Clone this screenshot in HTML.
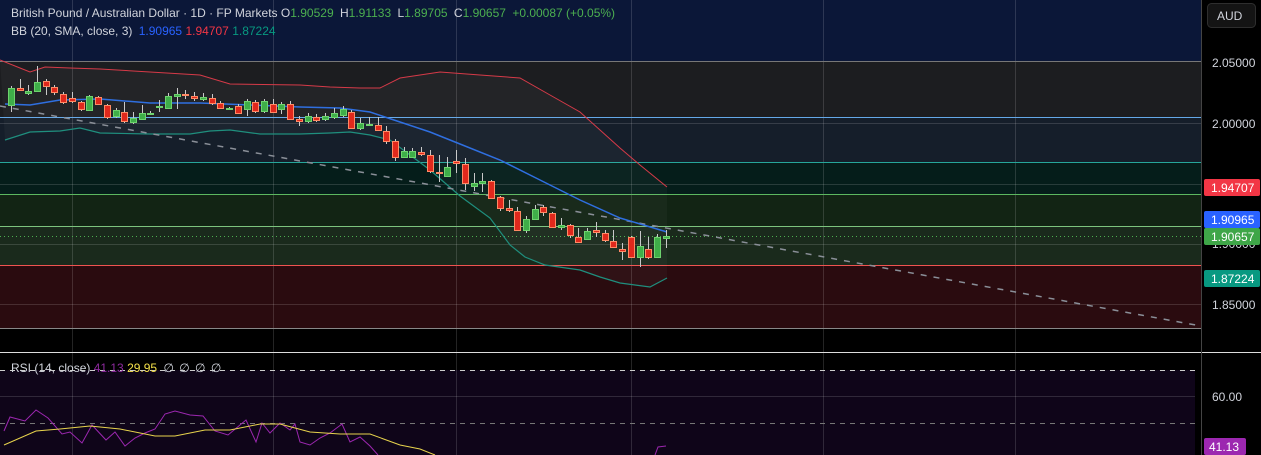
<!DOCTYPE html>
<html><head><meta charset="utf-8"><style>
html,body{margin:0;padding:0;background:#000;width:1261px;height:455px;overflow:hidden;font-family:"Liberation Sans",sans-serif}
svg{position:absolute;left:0;top:0}
.t{font-family:"Liberation Sans",sans-serif;font-size:12px}
</style></head><body>
<svg id="s" width="1261" height="455" xmlns="http://www.w3.org/2000/svg">
<!-- zones -->
<rect x="0" y="0" width="1201" height="61" fill="#0b1738"/>
<rect x="0" y="61" width="1201" height="56" fill="#1c1d20"/>
<rect x="0" y="117" width="1201" height="45" fill="#151e2a"/>
<rect x="0" y="162" width="1201" height="32" fill="#051d1a"/>
<rect x="0" y="194" width="1201" height="32" fill="#122414"/>
<rect x="0" y="226" width="1201" height="39" fill="#1a2a1c"/>
<rect x="0" y="265" width="1201" height="63" fill="#2a0b0f"/>
<rect x="0" y="328" width="1201" height="24" fill="#000"/>
<rect x="0" y="370" width="1195" height="85" fill="#0f0519"/>
<!-- grid -->
<g stroke="#ffffff" stroke-opacity="0.14" stroke-width="1">
<line x1="72.5" y1="0" x2="72.5" y2="455"/><line x1="273.5" y1="0" x2="273.5" y2="455"/>
<line x1="456.5" y1="0" x2="456.5" y2="455"/><line x1="631.5" y1="0" x2="631.5" y2="455"/>
<line x1="823.5" y1="0" x2="823.5" y2="455"/><line x1="1015.5" y1="0" x2="1015.5" y2="455"/>
<line x1="0" y1="123.5" x2="1201" y2="123.5"/><line x1="0" y1="184.5" x2="1201" y2="184.5"/>
<line x1="0" y1="244.5" x2="1201" y2="244.5"/><line x1="0" y1="304.5" x2="1201" y2="304.5"/>
<line x1="0" y1="396.5" x2="1195" y2="396.5"/>
</g>
<line x1="0" y1="61.5" x2="1201" y2="61.5" stroke="#777" />
<line x1="0" y1="117.5" x2="1201" y2="117.5" stroke="#64a8e8"/>
<line x1="0" y1="162.5" x2="1201" y2="162.5" stroke="#26a69a"/>
<line x1="0" y1="194.5" x2="1201" y2="194.5" stroke="#5cb860"/>
<line x1="0" y1="226.5" x2="1201" y2="226.5" stroke="#7cc47e"/>
<line x1="0" y1="236.5" x2="1201" y2="236.5" stroke="#4caf50" stroke-dasharray="1 3"/>
<line x1="0" y1="265.5" x2="1201" y2="265.5" stroke="#ef5350"/>
<line x1="0" y1="328.5" x2="1201" y2="328.5" stroke="#888"/>
<line x1="0" y1="352.5" x2="1261" y2="352.5" stroke="#ddd"/>
<line x1="0" y1="370.5" x2="1195" y2="370.5" stroke="#ccc" stroke-dasharray="5 5"/>
<line x1="0" y1="423.5" x2="1195" y2="423.5" stroke="#777" stroke-dasharray="5 5"/>
<line x1="1201.5" y1="0" x2="1201.5" y2="455" stroke="#444"/>
<!-- band fill -->
<path id="bf" fill="#ffffff" fill-opacity="0.03"/>
<path id="up" fill="none" stroke="#d63a48" stroke-width="1"/>
<path id="lo" fill="none" stroke="#1f8f7e" stroke-width="1.2"/>
<line x1="0" y1="106" x2="1201" y2="326" stroke="#8a8f98" stroke-width="1.5" stroke-dasharray="6 7"/>
<path id="mid" fill="none" stroke="#2f6fe0" stroke-width="1.5"/>
<g id="cd"></g>
<polyline fill="none" stroke="#9c27b0" stroke-width="1" points="4,431 10,417 25,421 36,410 48,418 62,434 70,432 82,443 92,425 106,440 115,432 125,446 135,438 145,433 155,429 165,414 175,411 190,415 203,416 215,431 228,435 240,425 246,420 256,442 262,423 270,433 280,423 290,430 295,424 300,442 310,445 320,438 330,433 342,424 350,442 360,437 370,446 378,455"/>
<polyline fill="none" stroke="#9c27b0" stroke-width="1" points="655,455 658,447 666,446"/>
<polyline fill="none" stroke="#e8d44d" stroke-width="1" points="4,445 36,431 60,429 90,426 120,429 155,436 175,436 205,430 230,430 260,424 280,424 310,432 340,434 370,434 400,445 420,449 435,455"/>
<!-- header -->
<text class="t" x="11" y="17" fill="#d1d4dc">British Pound / Australian Dollar · 1D · FP Markets <tspan>O</tspan><tspan fill="#4caf50">1.90529</tspan> <tspan dx="3">H</tspan><tspan fill="#4caf50">1.91133</tspan> <tspan dx="3">L</tspan><tspan fill="#4caf50">1.89705</tspan> <tspan dx="3">C</tspan><tspan fill="#4caf50">1.90657</tspan> <tspan dx="3" fill="#4caf50">+0.00087 (+0.05%)</tspan></text>
<text class="t" x="11" y="35" fill="#d1d4dc">BB (20, SMA, close, 3) <tspan dx="3" fill="#2962ff">1.90965</tspan> <tspan fill="#f23645">1.94707</tspan> <tspan fill="#089981">1.87224</tspan></text>
<rect x="9" y="362" width="240" height="13" fill="#000" opacity="0"/>
<text class="t" x="11" y="372" fill="#d1d4dc" font-size="11">RSI (14, close) <tspan fill="#8e2a9e">41.13</tspan> <tspan fill="#f5e14a">29.95</tspan> <tspan dx="3">∅</tspan> <tspan dx="2">∅</tspan> <tspan dx="2">∅</tspan> <tspan dx="2">∅</tspan></text>
<!-- axis -->
<rect x="1207.5" y="3.5" width="48" height="24" rx="4" fill="#141414" stroke="#2e2e2e"/>
<text class="t" x="1217" y="20" fill="#d1d4dc">AUD</text>
<g class="t" fill="#d1d4dc">
<text x="1212" y="67">2.05000</text>
<text x="1212" y="128">2.00000</text>
<text x="1212" y="248">1.90000</text>
<text x="1212" y="309">1.85000</text>
<text x="1212" y="401">60.00</text>
</g>
<rect x="1204" y="179" width="56" height="17" rx="2" fill="#f23645"/><text class="t" x="1211" y="192" fill="#fff">1.94707</text>
<rect x="1204" y="211" width="56" height="17" rx="2" fill="#2962ff"/><text class="t" x="1211" y="224" fill="#fff">1.90965</text>
<rect x="1204" y="228" width="56" height="17" rx="2" fill="#3fa648"/><text class="t" x="1211" y="241" fill="#fff">1.90657</text>
<rect x="1204" y="270" width="56" height="17" rx="2" fill="#089981"/><text class="t" x="1211" y="283" fill="#fff">1.87224</text>
<rect x="1204" y="438" width="42" height="17" rx="2" fill="#9c27b0"/><text class="t" x="1209" y="451" fill="#fff">41.13</text>
</svg>
<script>
var up=[[0,60],[20,68],[30,72],[45,67],[70,68],[100,69],[150,72],[200,75],[230,84],[300,85],[330,87],[360,88],[380,88],[400,78],[440,72],[480,75],[520,78],[550,95],[580,112],[600,130],[620,148],[640,165],[667,187]];
var mid=[[5,104],[30,105],[60,100],[100,99],[150,103],[200,103],[250,105],[300,107],[340,108],[370,112],[400,122],[430,132],[460,144],[500,160],[540,180],[580,200],[620,218],[667,232]];
var lo=[[5,140],[30,132],[60,131],[80,128],[100,133],[150,134],[190,134],[210,131],[230,130],[260,134],[300,134],[330,133],[350,132],[370,135],[390,140],[410,155],[430,170],[445,183],[460,196],[490,218],[510,245],[525,257],[545,265],[580,270],[600,277],[620,283],[650,287],[667,278]];
function P(a){return a.map(function(p,i){return (i?'L':'M')+p[0]+' '+p[1]}).join('')}
document.getElementById('up').setAttribute('d',P(up));
document.getElementById('mid').setAttribute('d',P(mid));
document.getElementById('lo').setAttribute('d',P(lo));
document.getElementById('bf').setAttribute('d',P(up)+P(lo.slice().reverse()).replace('M','L')+'Z');
var c=[[11,88,105,1,86,112],[20,88,90,0,79,91],[28,91,93,1,85,95],[37,82,91,1,66,92],[46,81,86,0,79,95],[54,87,92,0,85,95],[63,94,102,0,92,104],[72,98,101,0,92,103],[81,102,109,0,101,111],[89,96,110,1,95,111],[98,97,104,0,96,105],[107,105,117,0,104,119],[116,110,116,1,108,118],[124,112,121,0,102,123],[133,118,122,1,112,124],[142,113,119,1,105,120],[150,113,114,1,111,115],[159,106,107,1,100,112],[168,96,108,1,93,109],[177,94,96,1,88,109],[185,94,95,0,90,99],[194,96,98,0,92,101],[203,97,99,1,93,101],[212,98,103,0,94,105],[220,103,108,0,101,109],[229,108,109,1,107,110],[238,106,113,0,104,114],[247,101,109,1,99,116],[255,102,111,0,100,113],[264,101,111,1,99,113],[273,104,112,0,99,113],[281,104,109,1,102,114],[290,104,119,0,101,120],[299,119,121,0,116,126],[308,116,121,1,113,123],[316,117,120,0,114,122],[325,116,119,1,113,121],[334,113,117,1,108,119],[343,109,115,1,106,117],[351,112,128,0,110,129],[360,123,128,1,118,130],[369,124,125,1,117,126],[378,125,130,0,117,131],[386,131,141,0,126,144],[395,141,157,0,139,161],[404,151,157,1,147,158],[412,151,157,1,148,158],[421,152,154,0,147,156],[430,155,171,0,150,173],[439,172,173,0,155,182],[447,167,176,1,157,177],[456,161,163,0,150,173],[465,164,183,0,158,190],[474,183,186,1,173,191],[482,181,183,1,173,192],[491,181,198,0,180,199],[500,197,208,0,196,211],[509,208,210,0,200,212],[517,211,230,0,207,231],[526,219,230,1,216,233],[535,209,219,1,205,220],[543,207,212,0,205,216],[552,213,227,0,212,228],[561,225,227,1,218,230],[570,225,235,0,224,238],[578,237,242,0,228,243],[587,231,239,1,228,240],[596,230,232,0,222,237],[605,233,240,0,230,242],[613,241,247,0,230,248],[622,249,251,0,243,260],[631,237,257,0,236,258],[640,246,257,1,231,267],[648,249,257,0,237,259],[657,237,257,1,234,258],[666,236,238,1,230,248]];
var h='';c.forEach(function(k){var g=k[3];var f=g?'#3fae49':'#e0281c',s=g?'#6ed36e':'#ff8a65';
h+='<line x1="'+(k[0]+.5)+'" y1="'+k[4]+'" x2="'+(k[0]+.5)+'" y2="'+k[5]+'" stroke="#c9c9c9" stroke-width="1"/>';
var hh=Math.max(k[2]-k[1],1);h+='<rect x="'+(k[0]-2.5)+'" y="'+(k[1]+.5)+'" width="6" height="'+hh+'" fill="'+f+'" stroke="'+s+'" stroke-width="1"/>';});
document.getElementById('cd').innerHTML=h;
</script>
</body></html>
